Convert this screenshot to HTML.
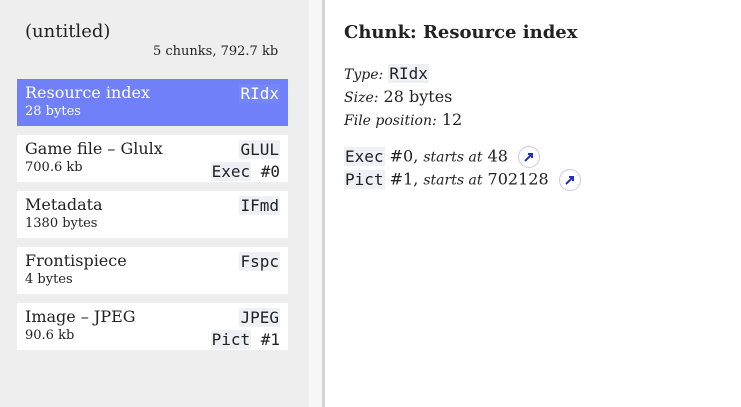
<!DOCTYPE html>
<html><head><style>
body{margin:0;width:741px;height:407px;overflow:hidden;background:#fff;font-family:"DejaVu Serif","Liberation Serif",serif;color:#222;position:relative}
.side{position:absolute;left:0;top:0;width:309px;height:407px;background:#eeeeee}
.gut{position:absolute;left:309px;top:0;width:13px;height:407px;background:#f7f7f7}
.line{position:absolute;left:322px;top:0;width:3px;height:407px;background:#d4d4d4}
.t{position:absolute;left:25px;top:21px;font-size:18px}
.cnt{position:absolute;left:153px;top:44px;font-size:13px;white-space:nowrap}
.card{position:absolute;left:17px;width:271px;height:47px;background:#fff}
.card.sel{background:#7080f8;color:#fff}
.n{position:absolute;left:8px;top:4px;font-size:16px}
.s{position:absolute;left:8px;top:25px;font-size:13px}
.k{position:absolute;right:8px;top:4px;font-family:"DejaVu Sans Mono","Liberation Mono",monospace;font-size:16px;text-align:right;line-height:22px}
.k span,.c{background:#eef0f6;padding:0 1px}
.sel .k span{background:#7585fa}
.main{position:absolute;left:344px;top:0}
h1{position:absolute;left:0;top:22px;margin:0;font-size:18px;white-space:nowrap}
.p{position:absolute;left:0;white-space:nowrap;font-size:16px}
.p i{font-size:14px}
.c{font-family:"DejaVu Sans Mono","Liberation Mono",monospace;font-size:16px}
.ic{display:inline-block;width:20px;height:20px;border:1px solid #c8c8f0;border-radius:50%;vertical-align:middle;margin-left:10px;position:relative}
</style></head><body>
<div class="side"></div><div class="gut"></div><div class="line"></div>
<div class="t">(untitled)</div>
<div class="cnt">5 chunks, 792.7 kb</div>
<div class="card sel" style="top:79px"><div class="n">Resource index</div><div class="s">28 bytes</div><div class="k"><span>RIdx</span></div></div>
<div class="card" style="top:135px"><div class="n">Game file – Glulx</div><div class="s">700.6 kb</div><div class="k"><span>GLUL</span><br><span>Exec</span> #0</div></div>
<div class="card" style="top:191px"><div class="n">Metadata</div><div class="s">1380 bytes</div><div class="k"><span>IFmd</span></div></div>
<div class="card" style="top:247px"><div class="n">Frontispiece</div><div class="s">4 bytes</div><div class="k"><span>Fspc</span></div></div>
<div class="card" style="top:303px"><div class="n">Image – JPEG</div><div class="s">90.6 kb</div><div class="k"><span>JPEG</span><br><span>Pict</span> #1</div></div>
<div class="main">
<h1>Chunk: Resource index</h1>
<div class="p" style="top:64px"><i>Type:</i> <span class="c">RIdx</span></div>
<div class="p" style="top:87px"><i>Size:</i> 28 bytes</div>
<div class="p" style="top:110px"><i>File position:</i> 12</div>
<div class="p" style="top:146px"><span class="c">Exec</span> #0, <i>starts at</i> 48<span class="ic"><svg width="20" height="20" viewBox="0 0 20 20"><path d="M6 14L13 7M9 7h4v4" stroke="#2030c0" stroke-width="2" fill="none"/></svg></span></div>
<div class="p" style="top:169px"><span class="c">Pict</span> #1, <i>starts at</i> 702128<span class="ic"><svg width="20" height="20" viewBox="0 0 20 20"><path d="M6 14L13 7M9 7h4v4" stroke="#2030c0" stroke-width="2" fill="none"/></svg></span></div>
</div>
</body></html>
